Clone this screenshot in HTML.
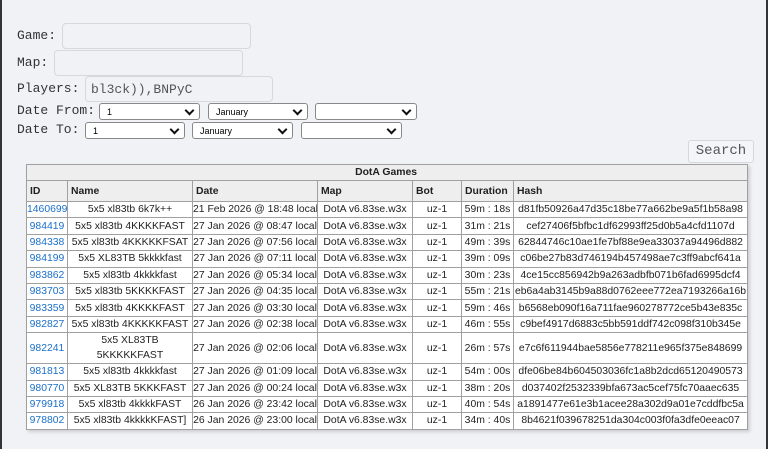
<!DOCTYPE html>
<html><head><meta charset="utf-8"><style>
*{box-sizing:border-box}
body{margin:0;width:768px;height:449px;background:#f0f2f6;position:relative;overflow:hidden;font-family:"Liberation Sans",Arial,sans-serif}
.edge{position:absolute;top:0;bottom:0;width:2px;background:#333}
.lbl{position:absolute;font-family:"Liberation Mono",monospace;font-size:13px;color:#333;left:17px}
.inp{position:absolute;height:26px;border:1px solid #d6d8dc;border-radius:4px;background:#f0f2f6;font-family:"Liberation Mono",monospace;font-size:13px;color:#555;padding:5px 0 0 5px}
.sel{position:absolute;height:17px;border:1px solid #888;border-radius:3px;background:#fff;font-size:9px;color:#000;padding:3px 0 0 7px}
.sel:after{content:"";position:absolute;right:6px;top:3px;width:5px;height:5px;border-right:2px solid #111;border-bottom:2px solid #111;transform:rotate(45deg)}
.btn{position:absolute;left:688px;top:140px;width:66px;height:23px;border:1px solid #d6d8dc;border-radius:3px;background:#f4f5f8;font-family:"Liberation Mono",monospace;font-size:14px;color:#555;text-align:center;line-height:21px}
table{position:absolute;left:26px;top:164px;width:721px;border-collapse:collapse;background:#fff;font-size:10.4px;color:#222;box-shadow:2px 2px 3px rgba(0,0,0,.15);table-layout:fixed}
td,th{border:1px solid #a0a0a0;padding:0;height:16.4px;text-align:center;white-space:nowrap;overflow:hidden}
th{text-align:left;font-weight:bold;background:#eeeeee;height:21px;padding-left:3px}
th.t{text-align:right;height:16px;padding-right:330px}
td.id{color:#1a6fc9}
td.w{white-space:normal;line-height:15px;height:31px}
</style></head><body>
<div class="edge" style="left:0"></div><div class="edge" style="left:766px"></div>
<div class="lbl" style="top:28px">Game:</div>
<div class="inp" style="left:62px;top:23px;width:189px"></div>
<div class="lbl" style="top:55px">Map:</div>
<div class="inp" style="left:54px;top:50px;width:189px"></div>
<div class="lbl" style="top:81px">Players:</div>
<div class="inp" style="left:85px;top:76px;width:188px">bl3ck)),BNPyC</div>
<div class="lbl" style="top:103px">Date From:</div>
<div class="sel" style="left:99px;top:103px;width:101px">1</div>
<div class="sel" style="left:208px;top:103px;width:100px">January</div>
<div class="sel" style="left:315px;top:103px;width:102px"></div>
<div class="lbl" style="top:122px">Date To:</div>
<div class="sel" style="left:85px;top:122px;width:100px">1</div>
<div class="sel" style="left:192px;top:122px;width:101px">January</div>
<div class="sel" style="left:301px;top:122px;width:101px"></div>
<div class="btn">Search</div>
<table>
<colgroup><col style="width:41px"><col style="width:125px"><col style="width:125px"><col style="width:95px"><col style="width:49px"><col style="width:52px"><col style="width:234px"></colgroup>
<tr><th class="t" colspan="7">DotA Games</th></tr>
<tr><th>ID</th><th>Name</th><th>Date</th><th>Map</th><th>Bot</th><th>Duration</th><th>Hash</th></tr>
<tr><td class="id">1460699</td><td>5x5 xl83tb 6k7k++</td><td>21 Feb 2026 @ 18:48 local</td><td>DotA v6.83se.w3x</td><td>uz-1</td><td>59m : 18s</td><td>d81fb50926a47d35c18be77a662be9a5f1b58a98</td></tr>
<tr><td class="id">984419</td><td>5x5 xl83tb 4KKKKFAST</td><td>27 Jan 2026 @ 08:47 local</td><td>DotA v6.83se.w3x</td><td>uz-1</td><td>31m : 21s</td><td>cef27406f5bfbc1df62993ff25d0b5a4cfd1107d</td></tr>
<tr><td class="id">984338</td><td>5x5 xl83tb 4KKKKKFSAT</td><td>27 Jan 2026 @ 07:56 local</td><td>DotA v6.83se.w3x</td><td>uz-1</td><td>49m : 39s</td><td>62844746c10ae1fe7bf88e9ea33037a94496d882</td></tr>
<tr><td class="id">984199</td><td>5x5 XL83TB 5kkkkfast</td><td>27 Jan 2026 @ 07:11 local</td><td>DotA v6.83se.w3x</td><td>uz-1</td><td>39m : 09s</td><td>c06be27b83d746194b457498ae7c3ff9abcf641a</td></tr>
<tr><td class="id">983862</td><td>5x5 xl83tb 4kkkkfast</td><td>27 Jan 2026 @ 05:34 local</td><td>DotA v6.83se.w3x</td><td>uz-1</td><td>30m : 23s</td><td>4ce15cc856942b9a263adbfb071b6fad6995dcf4</td></tr>
<tr><td class="id">983703</td><td>5x5 xl83tb 5KKKKFAST</td><td>27 Jan 2026 @ 04:35 local</td><td>DotA v6.83se.w3x</td><td>uz-1</td><td>55m : 21s</td><td>eb6a4ab3145b9a88d0762eee772ea7193266a16b</td></tr>
<tr><td class="id">983359</td><td>5x5 xl83tb 4KKKKFAST</td><td>27 Jan 2026 @ 03:30 local</td><td>DotA v6.83se.w3x</td><td>uz-1</td><td>59m : 46s</td><td>b6568eb090f16a711fae960278772ce5b43e835c</td></tr>
<tr><td class="id">982827</td><td>5x5 xl83tb 4KKKKKFAST</td><td>27 Jan 2026 @ 02:38 local</td><td>DotA v6.83se.w3x</td><td>uz-1</td><td>46m : 55s</td><td>c9bef4917d6883c5bb591ddf742c098f310b345e</td></tr>
<tr><td class="id">982241</td><td class="w">5x5 XL83TB<br>5KKKKKFAST</td><td>27 Jan 2026 @ 02:06 local</td><td>DotA v6.83se.w3x</td><td>uz-1</td><td>26m : 57s</td><td>e7c6f611944bae5856e778211e965f375e848699</td></tr>
<tr><td class="id">981813</td><td>5x5 xl83tb 4kkkkfast</td><td>27 Jan 2026 @ 01:09 local</td><td>DotA v6.83se.w3x</td><td>uz-1</td><td>54m : 00s</td><td>dfe06be84b604503036fc1a8b2dcd65120490573</td></tr>
<tr><td class="id">980770</td><td>5x5 XL83TB 5KKKFAST</td><td>27 Jan 2026 @ 00:24 local</td><td>DotA v6.83se.w3x</td><td>uz-1</td><td>38m : 20s</td><td>d037402f2532339bfa673ac5cef75fc70aaec635</td></tr>
<tr><td class="id">979918</td><td>5x5 xl83tb 4kkkkFAST</td><td>26 Jan 2026 @ 23:42 local</td><td>DotA v6.83se.w3x</td><td>uz-1</td><td>40m : 54s</td><td>a1891477e61e3b1acee28a302d9a01e7cddfbc5a</td></tr>
<tr><td class="id">978802</td><td>5x5 xl83tb 4kkkkKFAST]</td><td>26 Jan 2026 @ 23:00 local</td><td>DotA v6.83se.w3x</td><td>uz-1</td><td>34m : 40s</td><td>8b4621f039678251da304c003f0fa3dfe0eeac07</td></tr>
</table>
</body></html>
